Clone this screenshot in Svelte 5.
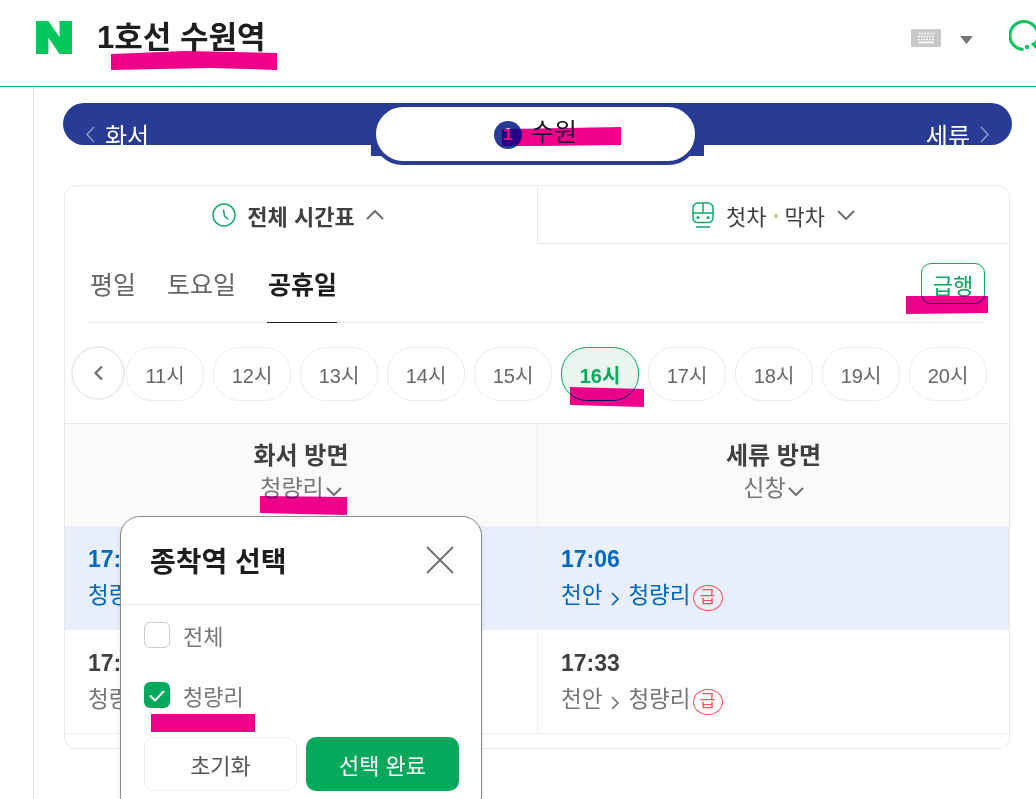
<script>
  const days = [
    { label: '평일', active: false },
    { label: '토요일', active: false },
    { label: '공휴일', active: true }
  ];
  const hours = [11, 12, 13, 14, 15, 16, 17, 18, 19, 20];
  const columns = [
    { title: '화서 방면', dest: '청량리', rows: [['17:02', '천안', '청량리'], ['17:21', '천안', '청량리']], flip: true },
    { title: '세류 방면', dest: '신창', rows: [['17:06', '청량리', '천안'], ['17:33', '청량리', '천안']], flip: false }
  ];
</script>

<div class="page">
  <header class="top">
    <svg class="logo" viewBox="0 0 36 33" width="36" height="33" aria-hidden="true">
      <path d="M0 0h12.4l11.2 16.2V0H36v33H23.6L12.4 16.8V33H0z" fill="#03c75a" />
    </svg>
    <h1 class="title">1호선 수원역</h1>
    <div class="tools">
      <svg class="kbd" viewBox="0 0 30 18" width="30" height="18" aria-hidden="true">
        <rect width="30" height="18" rx="1.5" fill="#c8c8c8" />
        <path d="M8 4.5h15M7 7.5h16M7 10.5h16" stroke="#fff" stroke-width="1.6" stroke-dasharray="1.6 1.2" fill="none" />
        <path d="M7.5 13.5h15.500" stroke="#fff" stroke-width="1.6" fill="none" />
      </svg>
      <svg class="caret" viewBox="0 0 13 8" width="13" height="8" aria-hidden="true">
        <path d="M0 0h13L6.500 8z" fill="#777" />
      </svg>
      <svg class="q" viewBox="0 0 37 32" width="37" height="32" aria-hidden="true">
        <path d="M14.500 29.500A14 14 0 1 1 26 24" fill="none" stroke="#03c75a" stroke-width="3" />
        <circle cx="18" cy="27" r="2.200" fill="#03c75a" />
        <path d="M23 23l5 5" stroke="#03c75a" stroke-width="3" fill="none" />
      </svg>
    </div>
  </header>

  <main class="main">
    <nav class="bar">
      <div class="side">
        <svg viewBox="0 0 10 17" width="10" height="17" aria-hidden="true"><path d="M9 1L2 8.500 9 16" /></svg>
        <span>화서</span>
      </div>
      <div class="current">
        <div class="pill">
          <span class="line">1</span>
          <span class="name">수원</span>
        </div>
      </div>
      <div class="side end">
        <span>세류</span>
        <svg viewBox="0 0 10 17" width="10" height="17" aria-hidden="true"><path d="M1 1l7 7.500L1 16" /></svg>
      </div>
    </nav>

    <section class="card">
      <div class="modes">
        <div class="mode on">
          <svg viewBox="0 0 24 24" width="24" height="24" aria-hidden="true">
            <circle cx="12" cy="12" r="11" fill="none" stroke="#12a868" stroke-width="1.500" />
            <path d="M11.500 6.500l1 6.500 4 3.500" fill="none" stroke="#12a868" stroke-width="1.500" />
          </svg>
          <strong>전체 시간표</strong>
          <svg class="chev" viewBox="0 0 18 10" width="18" height="10" aria-hidden="true"><path d="M1 9l8-8 8 8" /></svg>
        </div>
        <div class="mode off">
          <svg viewBox="0 0 22 26" width="22" height="26" aria-hidden="true">
            <path d="M1 16V6a5 5 0 0 1 5-5h10a5 5 0 0 1 5 5v10a4.500 4.500 0 0 1-4.500 4.500h-11A4.500 4.500 0 0 1 1 16zM1 11h20M11 1v10M4 25h14" fill="none" stroke="#12a868" stroke-width="1.500" />
            <circle cx="6" cy="15.500" r="1.500" fill="#12a868" />
            <circle cx="16" cy="15.500" r="1.500" fill="#12a868" />
          </svg>
          <span class="mode-text">첫차<i class="dot"></i>막차</span>
          <svg class="chev" viewBox="0 0 18 10" width="18" height="10" aria-hidden="true"><path d="M1 1l8 8 8-8" /></svg>
        </div>
      </div>

      <div class="days">
        {#each days as d}
          <button class="day" class:active={d.active}>{d.label}</button>
        {/each}
        <button class="express">급행</button>
      </div>

      <div class="hours">
        <button class="prev" aria-label="이전">
          <svg viewBox="0 0 10 16" width="10" height="16" aria-hidden="true"><path d="M9 1.500L2.500 8 9 14.500" /></svg>
        </button>
        <div class="chips">
          {#each hours as h}
            <button class="chip" class:sel={h === 16}>{h}시</button>
          {/each}
        </div>
      </div>

      <div class="table">
        {#each columns as c}
          <div class="col">
            <div class="head">
              <div class="dir">{c.title}</div>
              <div class="dest">
                {c.dest}
                <svg viewBox="0 0 16 9" width="16" height="9" aria-hidden="true"><path d="M1 1l7 7 7-7" /></svg>
              </div>
            </div>
            {#each c.rows as r, i}
              <div class="row" class:now={i === 0}>
                <div class="time">{r[0]}</div>
                <div class="route">
                  <span>{r[2]}</span>
                  <svg viewBox="0 0 8 14" width="8" height="14" aria-hidden="true"><path d="M1 1l6 6-6 6" /></svg>
                  <span>{r[1]}</span>
                  <span class="exp">급</span>
                </div>
              </div>
            {/each}
          </div>
        {/each}
      </div>
    </section>
  </main>

  <aside class="popup">
    <div class="pop-head">
      <h2>종착역 선택</h2>
      <svg viewBox="0 0 28 28" width="28" height="28" aria-hidden="true"><path d="M1 1l26 26M27 1L1 27" /></svg>
    </div>
    <div class="pop-body">
      <div class="opt">
        <span class="box"></span>
        <span>전체</span>
      </div>
      <div class="opt">
        <span class="box checked">
          <svg viewBox="0 0 16 13" width="16" height="13" aria-hidden="true"><path d="M1 6.500l5 5L15 2" /></svg>
        </span>
        <span>청량리</span>
      </div>
      <div class="actions">
        <button class="reset">초기화</button>
        <button class="done">선택 완료</button>
      </div>
    </div>
  </aside>

  <svg class="marks" viewBox="0 0 1036 799" width="1036" height="799" aria-hidden="true">
    <polygon points="111,54 185,51 277,53 277,70 210,68 111,70" />
    <polygon points="502,129 621,127 621,145 540,146 502,146" />
    <polygon points="906,296 988,296 988,313 906,314" />
    <polygon points="570,387 644,389 644,407 570,405" />
    <polygon points="260,496 347,497 347,515 300,514 260,513" />
    <polygon points="151,714 255,714 255,732 151,732" />
  </svg>
</div>

<style>
  :global(body) {
    margin: 0;
    background: #fff;
  }
  .page {
    position: relative;
    width: 1036px;
    height: 799px;
    overflow: hidden;
    background: #fff;
    font-family: "Liberation Sans", "Noto Sans CJK KR", sans-serif;
    color: #404040;
  }
  button {
    font-family: inherit;
    padding: 0;
    background: none;
    cursor: pointer;
  }

  .top {
    display: flex;
    align-items: center;
    box-sizing: border-box;
    height: 87px;
    padding: 0 0 11px 36px;
    border-bottom: 1px solid #03c75a;
    overflow: hidden;
  }
  .title {
    margin: 0 0 0 25px;
    font-size: 31px;
    font-weight: 700;
    line-height: 36px;
    color: #1e1e1e;
    white-space: nowrap;
  }
  .tools {
    display: flex;
    align-items: center;
    margin-left: auto;
    margin-right: -10px;
  }
  .caret {
    margin: 4px 0 0 19px;
  }
  .q {
    margin: -4px 0 0 36px;
  }

  .main {
    box-sizing: border-box;
    height: 712px;
    margin-left: 33px;
    border-left: 1px solid #e5e5e5;
    padding: 16px 0 0 29px;
  }

  .bar {
    display: grid;
    grid-template-columns: 309px 327px 313px;
    align-items: center;
    width: 949px;
    height: 42px;
    border-radius: 21px;
    background: #283c96;
  }
  .side {
    display: flex;
    align-items: center;
    gap: 10px;
    padding: 0 22px;
    font-size: 24px;
    color: #fff;
  }
  .side.end {
    justify-content: flex-end;
  }
  .side svg path {
    fill: none;
    stroke: #8f99c8;
    stroke-width: 1.500;
  }
  .current {
    position: relative;
    height: 62px;
    display: flex;
  }
  .current::before {
    content: "";
    position: absolute;
    left: -1px;
    right: -5px;
    top: 11px;
    height: 42px;
    background: #283c96;
  }
  .pill {
    position: relative;
    flex: 1;
    display: flex;
    align-items: center;
    justify-content: center;
    gap: 9px;
    border: 4px solid #283c96;
    border-radius: 31px;
    background: #fff;
  }
  .line {
    display: flex;
    align-items: center;
    justify-content: center;
    width: 28px;
    height: 28px;
    margin-top: 2px;
    border-radius: 50%;
    background: #283c96;
    color: #fff;
    font-size: 17px;
    font-weight: 700;
  }
  .name {
    font-size: 25px;
    line-height: 30px;
    margin-top: -4px;
    color: #1e1e1e;
  }

  .card {
    box-sizing: border-box;
    width: 946px;
    height: 564px;
    margin: 40px 0 0 1px;
    border: 1px solid #e8e8e8;
    border-radius: 12px;
    overflow: hidden;
  }
  .modes {
    display: grid;
    grid-template-columns: 472px 472px;
    height: 58px;
  }
  .mode {
    display: flex;
    align-items: center;
    justify-content: center;
    font-size: 22px;
    color: #404040;
  }
  .mode.on {
    gap: 11px;
    padding-right: 6px;
  }
  .mode.on strong {
    font-weight: 700;
  }
  .mode.off {
    gap: 12px;
    border-left: 1px solid #e8e8e8;
    border-bottom: 1px solid #e8e8e8;
  }
  .mode-text {
    display: flex;
    align-items: center;
  }
  .dot {
    width: 4px;
    height: 4px;
    margin: 2px 7px 0;
    border-radius: 50%;
    background: #c5cf8f;
  }
  .chev path {
    fill: none;
    stroke: #6e6e6e;
    stroke-width: 2;
  }

  .days {
    display: flex;
    align-items: stretch;
    box-sizing: border-box;
    height: 79px;
    margin: 0 24px;
    border-bottom: 1px solid #e8e8e8;
  }
  .day {
    border: 0;
    margin: 0 31px -1px 0;
    padding: 0 0 1px 1px;
    border-bottom: 1px solid transparent;
    font-size: 25px;
    color: #666;
  }
  .day:first-child {
    margin-right: 30px;
  }
  .day.active {
    font-weight: 700;
    color: #1e1e1e;
    border-bottom-color: #1e1e1e;
  }
  .express {
    align-self: flex-start;
    box-sizing: border-box;
    width: 64px;
    height: 41px;
    margin: 19px 0 0 auto;
    border: 1px solid #05a95c;
    border-radius: 10px;
    font-size: 22px;
    color: #05a95c;
  }

  .hours {
    display: flex;
    align-items: flex-start;
    height: 100px;
    padding: 23px 0 0 6px;
    box-sizing: border-box;
  }
  .prev {
    display: flex;
    align-items: center;
    justify-content: center;
    box-sizing: border-box;
    width: 54px;
    height: 54px;
    border: 2px solid #ececec;
    border-radius: 50%;
  }
  .prev path {
    fill: none;
    stroke: #6e6e6e;
    stroke-width: 2.200;
  }
  .chips {
    display: flex;
    gap: 9px;
    margin: 1px 0 0 1px;
  }
  .chip {
    box-sizing: border-box;
    width: 78px;
    height: 54px;
    border: 1px solid #ececec;
    border-radius: 26px;
    font-size: 20px;
    color: #666;
  }
  .chip.sel {
    border-color: #05a95c;
    background: #e9f6f0;
    color: #05a95c;
    font-weight: 700;
  }

  .table {
    display: grid;
    grid-template-columns: 472px 472px;
    border-top: 1px solid #e8e8e8;
  }
  .col + .col {
    border-left: 1px solid #eee;
  }
  .head {
    box-sizing: border-box;
    height: 102px;
    padding-top: 15px;
    background: #fafafa;
    text-align: center;
  }
  .dir {
    font-size: 24px;
    font-weight: 700;
    line-height: 34px;
    color: #404040;
  }
  .dest {
    display: flex;
    align-items: center;
    justify-content: center;
    gap: 2px;
    font-size: 23px;
    line-height: 30px;
    color: #777;
  }
  .dest svg {
    margin-top: 6px;
  }
  .dest path {
    fill: none;
    stroke: #6e6e6e;
    stroke-width: 2;
  }
  .row {
    box-sizing: border-box;
    height: 104px;
    padding: 18px 0 0 23px;
    border-bottom: 1px solid #eee;
    color: #777;
  }
  .row.now {
    border-bottom: 0;
    background: #e8eefa;
    color: #0068c3;
  }
  .time {
    font-size: 23px;
    font-weight: 700;
    line-height: 30px;
    color: #404040;
  }
  .now .time {
    color: #0068c3;
  }
  .route {
    display: flex;
    align-items: center;
    margin-top: 6px;
    font-size: 22.500px;
    line-height: 32px;
    white-space: nowrap;
  }
  .route svg {
    margin: 6px 9px 0 9px;
  }
  .route path {
    fill: none;
    stroke: currentColor;
    stroke-width: 1.600;
  }
  .exp {
    display: flex;
    align-items: center;
    justify-content: center;
    box-sizing: border-box;
    width: 30px;
    height: 26px;
    margin: 3px 0 0 2px;
    border: 1px solid #ff4f55;
    border-radius: 50%;
    font-size: 17px;
    color: #ff4f55;
  }

  .popup {
    position: absolute;
    left: 120px;
    top: 516px;
    box-sizing: border-box;
    width: 362px;
    height: 300px;
    border: 1px solid #8c8c8c;
    border-radius: 20px;
    background: #fff;
    box-shadow: 0 1px 4px rgba(0, 0, 0, 0.12);
  }
  .pop-head {
    display: flex;
    align-items: center;
    justify-content: space-between;
    box-sizing: border-box;
    height: 88px;
    padding: 0 27px 2px 29px;
    border-bottom: 1px solid #e8e8e8;
  }
  .pop-head h2 {
    margin: 0;
    font-size: 28px;
    font-weight: 700;
    color: #1e1e1e;
  }
  .pop-head path {
    fill: none;
    stroke: #6e6e6e;
    stroke-width: 1.800;
  }
  .pop-body {
    padding: 17px 22px 0 23px;
  }
  .opt {
    display: flex;
    align-items: center;
    gap: 13px;
    height: 26px;
    margin-bottom: 34px;
    font-size: 22px;
    color: #777;
  }
  .box {
    display: flex;
    align-items: center;
    justify-content: center;
    box-sizing: border-box;
    width: 26px;
    height: 26px;
    border: 1px solid #ccc;
    border-radius: 6px;
  }
  .box.checked {
    border: 0;
    background: #05a95c;
  }
  .box path {
    fill: none;
    stroke: #fff;
    stroke-width: 2;
  }
  .actions {
    display: flex;
    gap: 9px;
    margin-top: -5px;
  }
  .actions button {
    box-sizing: border-box;
    width: 153px;
    height: 54px;
    border-radius: 10px;
    font-size: 22px;
  }
  .reset {
    border: 1px solid #ececec;
    color: #555;
  }
  .actions .done {
    border: 0;
    background: #05a95c;
    color: #fff;
  }

  .marks {
    position: absolute;
    left: 0;
    top: 0;
    pointer-events: none;
    mix-blend-mode: darken;
  }
  .marks polygon {
    fill: #ee0088;
  }
</style>
